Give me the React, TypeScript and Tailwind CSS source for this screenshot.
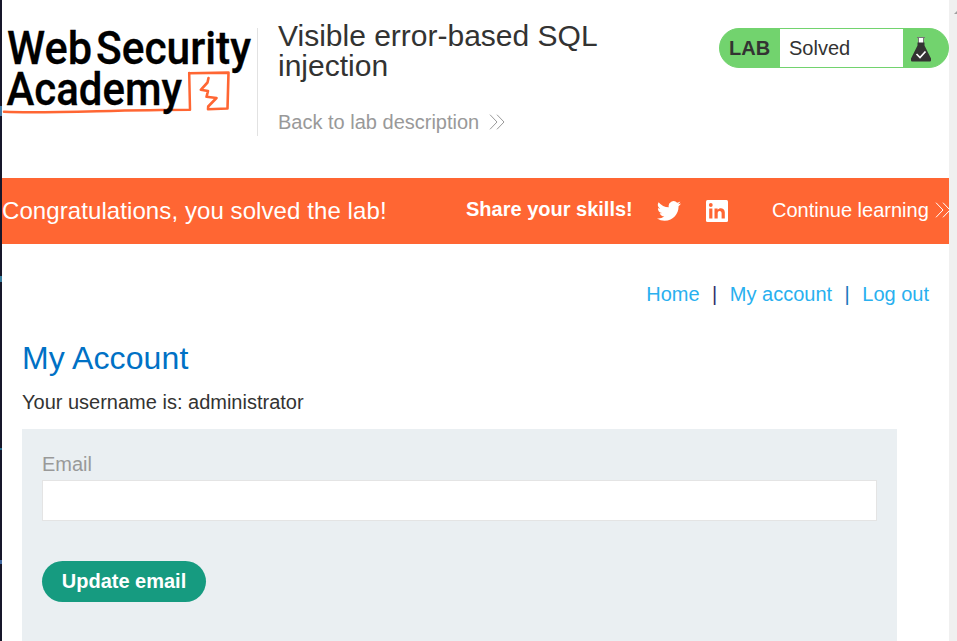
import React from 'react';

function Chevrons({ className }: { className: string }) {
  return (
    <svg className={className} width="16" height="16" viewBox="0 0 16 16" fill="none" stroke="currentColor" strokeWidth="1">
      <path d="M1 .7 8 8 1 15.3M8 .7 15 8 8 15.3" />
    </svg>
  );
}

function Logo() {
  return (
    <svg className="shrink-0" width="255" height="100" viewBox="2 20 255 100" aria-label="Web Security Academy">
      <g fill="none" stroke="#ff6633" strokeLinecap="round" strokeLinejoin="round">
        <path d="M4 111.8C50 113.6 110 110 190 109.8L189.2 73" strokeWidth="2.5" />
        <path d="M189.2 73.200L228.500 72.600L227.500 108.500L208 109.300L208.200 106.500L216.500 98L206.500 96.800L208 91L200.800 89.800L207.500 82.500L208.500 78" strokeWidth="2.600" />
      </g>
      <g fill="#000" stroke="#000" strokeWidth="0.3" fontFamily="Roboto, 'Liberation Sans', sans-serif" fontWeight="500" fontSize="46.500">
        <text x="7" y="64" textLength="85" lengthAdjust="spacingAndGlyphs">Web</text>
        <text x="96" y="64" textLength="155" lengthAdjust="spacingAndGlyphs">Security</text>
        <text x="6.5" y="105" textLength="175.500" lengthAdjust="spacingAndGlyphs">Academy</text>
      </g>
    </svg>
  );
}

function Flask() {
  return (
    <svg width="20" height="26" viewBox="0 0 20 26">
      <path d="M7.5 1.5h5v5.5h-5z" fill="#fff" />
      <path d="M6 1.500h8M7.500 1v6M12.500 1v6" fill="none" stroke="#777" strokeWidth="1" />
      <path d="M6.500 6.500h7v3L20 22.500V24.500q0 1-1 1H1Q0 25.500 0 24.500v-2L6.500 9.500z" fill="#333332" />
      <path d="M5.500 18 9 21.500 14.500 15.500" fill="none" stroke="#fff" strokeWidth="1.700" />
    </svg>
  );
}

function Header() {
  return (
    <header className="flex h-[178px] items-start">
      <div className="w-[255px] pt-5"><Logo /></div>
      <div className="mt-7 h-[108px] w-px bg-[#e2e2e2]" />
      <div className="w-[420px] pl-5 pt-[21px]">
        <h1 className="w-[340px] text-[30px] leading-[30px]">Visible error-based SQL injection</h1>
        <a className="mt-[29px] flex items-center whitespace-nowrap text-[20px] leading-6 text-[#999]">
          Back to lab description<Chevrons className="ml-[10px]" />
        </a>
      </div>
      <div className="ml-auto mt-7 flex h-10 w-[230px] overflow-hidden rounded-[20px] border border-[#72d36e] bg-[#72d36e] text-[20px] leading-[38px]">
        <b className="w-[60px] pl-[9px]">LAB</b>
        <span className="w-[123px] bg-white pl-[9px]">Solved</span>
        <span className="pl-2 pt-[7px]"><Flask /></span>
      </div>
    </header>
  );
}

function Banner() {
  return (
    <section className="flex h-[66px] items-center overflow-hidden whitespace-nowrap bg-[#ff6633] text-[20px] text-white">
      <p className="w-[464px] shrink-0 text-[24px] leading-[30px] tracking-[0.085px]">Congratulations, you solved the lab!</p>
      <b className="w-[191px] shrink-0 pb-1">Share your skills!</b>
      <svg className="w-6 shrink-0" height="24" viewBox="0 0 24 24" fill="currentColor">
        <path d="M23.950 4.570a10 10 0 0 1-2.820.770 4.960 4.960 0 0 0 2.160-2.720 9.900 9.900 0 0 1-3.120 1.190 4.920 4.920 0 0 0-8.390 4.480A13.980 13.980 0 0 1 1.640 3.160a4.920 4.920 0 0 0 1.520 6.570 4.900 4.900 0 0 1-2.230-.610v.060a4.920 4.920 0 0 0 3.950 4.830 5 5 0 0 1-2.210.080 4.940 4.940 0 0 0 4.600 3.420A9.870 9.870 0 0 1 0 19.540a13.990 13.990 0 0 0 7.550 2.210c9.050 0 14-7.500 14-13.980 0-.210 0-.420-.020-.630a9.940 9.940 0 0 0 2.460-2.550z" />
      </svg>
      <svg className="ml-[25px] shrink-0" width="22" height="22" viewBox="0 0 22 22">
        <rect width="22" height="22" rx="1.500" fill="#fff" />
        <path d="M3.200 8.500h3.200v10H3.200zM8.500 8.500h3.100v1.300c1.700-2.600 7.200-2 7.200 2.400v6.300h-3.200v-5.200c0-3.100-3.900-3-3.900 0v5.200H8.500z" fill="#ff6633" />
        <circle cx="4.800" cy="5" r="1.900" fill="#ff6633" />
      </svg>
      <a className="ml-11 flex items-center pb-0.5">Continue learning<Chevrons className="ml-1.5 shrink-0" /></a>
    </section>
  );
}

export default function App() {
  return (
    <div className="flex h-[641px] w-[957px] overflow-hidden bg-white font-['Liberation_Sans',Arial,sans-serif] text-[#333332]">
      <div className="w-0.5 shrink-0 bg-[linear-gradient(#17172a_0_106px,#447ba5_106px_116px,#17172a_116px_276px,#387d9e_276px_282px,#17172a_282px_448px,#246a8c_448px_450px,#17172a_450px_560px,#4268a0_560px_564px,#17172a_564px)]" />
      <main className="w-[947px] shrink-0">
        <Header />
        <Banner />
        <nav className="flex h-[100px] items-center justify-end pr-5 text-[20px] leading-6 text-[#29b0ef]">
          <a>Home</a>
          <span className="mx-[12.500px] text-[#30306b]">|</span>
          <a>My account</a>
          <span className="mx-[12.500px] text-[#1b78bb]">|</span>
          <a>Log out</a>
        </nav>
        <section className="pl-5">
          <h2 className="text-[32px] leading-7 tracking-[0.1px] text-[#0071c5]">My Account</h2>
          <p className="mt-[18px] text-[20px] leading-6">Your username is: administrator</p>
          <form className="mt-[15px] h-[212px] w-[875px] bg-[#eaeff2] px-5 pt-[23px] text-[20px]">
            <label htmlFor="email" className="block h-7 leading-6 text-[#999]">Email</label>
            <input id="email" type="email" className="block h-[41px] w-[835px] border border-[#e4e4e4] bg-white px-2 outline-none" />
            <button type="button" className="mt-10 h-[41px] w-[164px] rounded-full bg-[#169b80] pb-0.5 font-bold text-white">Update email</button>
          </form>
        </section>
      </main>
      <aside className="w-2 shrink-0 bg-[#f0f0f0] pl-[5px] pt-[11px]">
        <svg width="3" height="3" viewBox="0 0 3 3"><path d="M0 3 3 0v3z" fill="#a0a0a0" /></svg>
      </aside>
    </div>
  );
}
